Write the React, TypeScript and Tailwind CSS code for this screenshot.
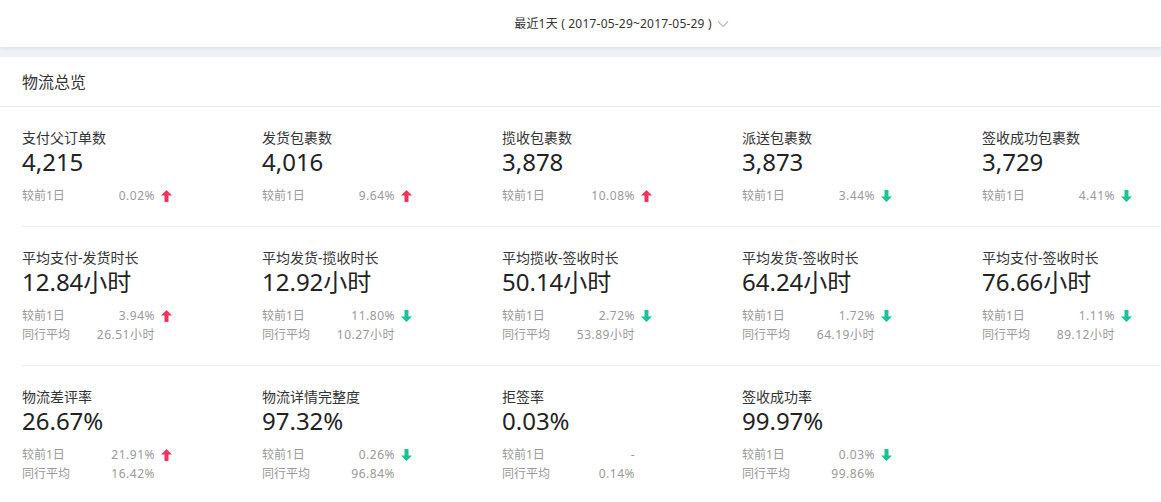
type Trend = "up" | "down" | "none";

type Metric = {
  title: string;
  value: string;
  change: string;
  trend: Trend;
  average?: string;
};

const rows: Metric[][] = [
  [
    { title: "支付父订单数", value: "4,215", change: "0.02%", trend: "up" },
    { title: "发货包裹数", value: "4,016", change: "9.64%", trend: "up" },
    { title: "揽收包裹数", value: "3,878", change: "10.08%", trend: "up" },
    { title: "派送包裹数", value: "3,873", change: "3.44%", trend: "down" },
    { title: "签收成功包裹数", value: "3,729", change: "4.41%", trend: "down" },
  ],
  [
    { title: "平均支付-发货时长", value: "12.84小时", change: "3.94%", trend: "up", average: "26.51小时" },
    { title: "平均发货-揽收时长", value: "12.92小时", change: "11.80%", trend: "down", average: "10.27小时" },
    { title: "平均揽收-签收时长", value: "50.14小时", change: "2.72%", trend: "down", average: "53.89小时" },
    { title: "平均发货-签收时长", value: "64.24小时", change: "1.72%", trend: "down", average: "64.19小时" },
    { title: "平均支付-签收时长", value: "76.66小时", change: "1.11%", trend: "down", average: "89.12小时" },
  ],
  [
    { title: "物流差评率", value: "26.67%", change: "21.91%", trend: "up", average: "16.42%" },
    { title: "物流详情完整度", value: "97.32%", change: "0.26%", trend: "down", average: "96.84%" },
    { title: "拒签率", value: "0.03%", change: "-", trend: "none", average: "0.14%" },
    { title: "签收成功率", value: "99.97%", change: "0.03%", trend: "down", average: "99.86%" },
  ],
];

function Arrow({ trend }: { trend: Trend }) {
  if (trend === "none") return <span className="w-[11px]" />;
  const up = trend === "up";
  return (
    <svg width="11" height="12" viewBox="0 0 11 12" className="ml-[6px]">
      <path
        d={up ? "M5.5 0 L11 5.5 L7.5 5.5 L7.5 12 L3.5 12 L3.5 5.5 L0 5.5 Z" : "M5.5 12 L11 6.5 L7.5 6.5 L7.5 0 L3.5 0 L3.5 6.5 L0 6.5 Z"}
        fill={up ? "#f5325c" : "#19c393"}
      />
    </svg>
  );
}

function MetricCell({ metric }: { metric: Metric }) {
  return (
    <div>
      <p className="text-[14px] leading-[20px] text-[#333]">{metric.title}</p>
      <p className="text-[24px] leading-[28px] text-[#222]">{metric.value}</p>
      <div className="mt-[11px] flex items-center text-[12px] leading-[18px] text-[#999]">
        <div className="flex w-[133px] justify-between">
          <span>较前1日</span>
          <span className="tracking-[0.5px]">{metric.change}</span>
        </div>
        <Arrow trend={metric.trend} />
      </div>
      {metric.average && (
        <div className="flex w-[133px] justify-between text-[12px] leading-[19px] text-[#999]">
          <span>同行平均</span>
          <span className="tracking-[0.5px]">{metric.average}</span>
        </div>
      )}
    </div>
  );
}

export default function App() {
  return (
    <div
      className="h-[502px] w-full overflow-hidden bg-white"
      style={{ fontFamily: '"Noto Sans", "Noto Sans CJK SC", sans-serif' }}
    >
      <header className="relative z-10 flex h-[47px] items-center justify-center bg-white pl-[82px] shadow-[0_1px_4px_rgba(0,0,0,0.08)]">
        <div className="flex items-center text-[12px] text-[#333]">
          <span className="tracking-[0.2px]">最近1天 ( 2017-05-29~2017-05-29 )</span>
          <svg width="12" height="8" viewBox="0 0 12 8" className="ml-[5px]">
            <path d="M1 1.5 L6 6.5 L11 1.5" fill="none" stroke="#b4bccc" strokeWidth="1.2" />
          </svg>
        </div>
      </header>
      <div className="h-[10px] bg-[#eef1f6]" />
      <section className="bg-white">
        <div className="flex h-[50px] items-center border-b border-[#e9e9e9] px-[22px]">
          <h2 className="text-[16px] text-[#333]">物流总览</h2>
        </div>
        <div className="pl-[22px]">
          {rows.map((row, i) => (
            <div
              key={i}
              className={`grid grid-cols-[repeat(5,240px)] pt-[21px] pb-[21px] ${
                i < rows.length - 1 ? "border-b border-[#eef0f5]" : ""
              }`}
            >
              {row.map((metric) => (
                <MetricCell key={metric.title} metric={metric} />
              ))}
            </div>
          ))}
        </div>
      </section>
    </div>
  );
}
